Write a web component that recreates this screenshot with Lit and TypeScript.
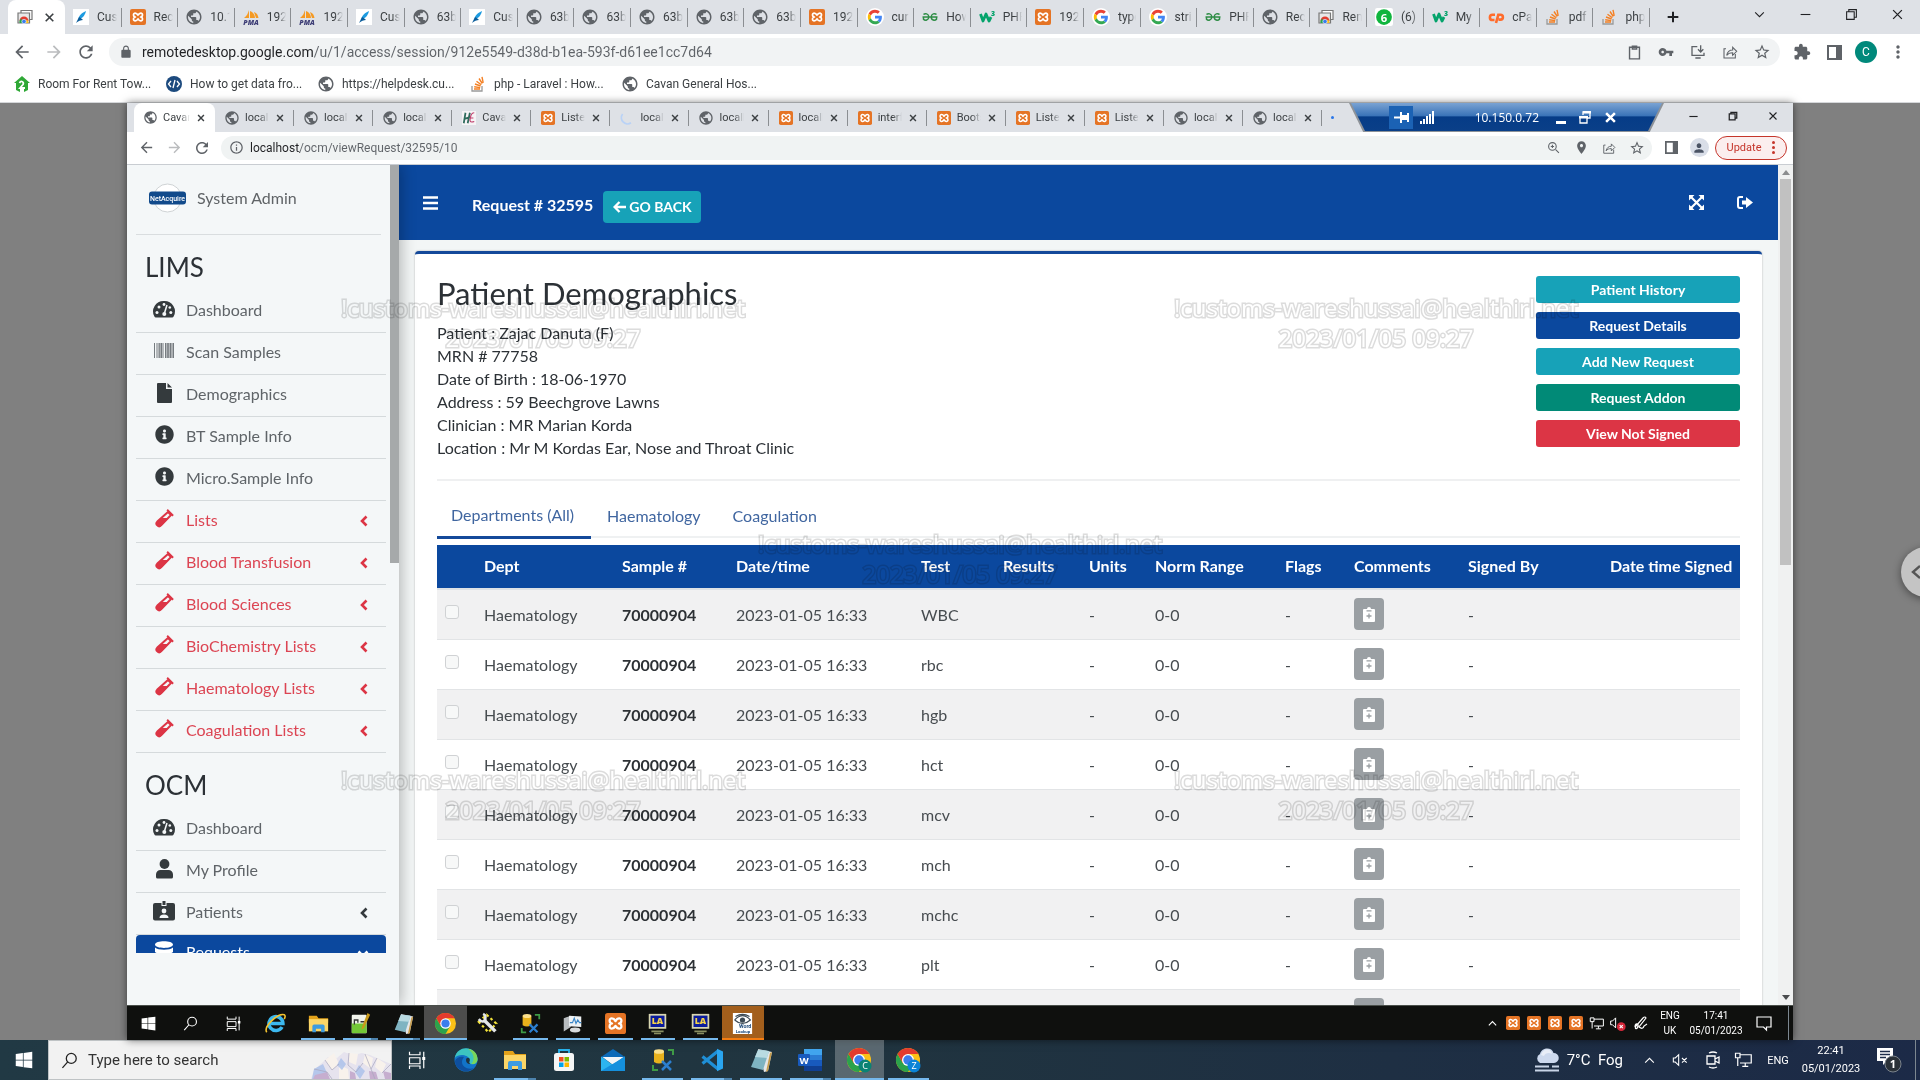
import { LitElement, html, svg, css, nothing } from "lit";
import type { TemplateResult } from "lit";
import { customElement } from "lit/decorators.js";
import { classMap } from "lit/directives/class-map.js";

/* ---------- icons ---------- */

const icon = (w: number, h: number, box: string, body: unknown) =>
  html`<svg class="icon" width=${w} height=${h} viewBox=${box} aria-hidden="true">${body}</svg>`;

const solid = (size: number, d: string) => icon(size, size, "0 0 24 24", svg`<path fill="currentColor" d=${d} />`);
const line = (size: number, d: string, width = 2) =>
  icon(size, size, "0 0 24 24", svg`<path fill="none" stroke="currentColor" stroke-width=${width} d=${d} />`);

const P = {
  back: "M20 11H7.83l5.59-5.59L12 4l-8 8 8 8 1.41-1.41L7.83 13H20v-2z",
  forward: "M4 11h12.17l-5.59-5.59L12 4l8 8-8 8-1.41-1.41L16.17 13H4v-2z",
  refresh:
    "M17.65 6.35C16.2 4.9 14.21 4 12 4c-4.42 0-7.99 3.58-7.99 8s3.57 8 7.99 8c3.73 0 6.84-2.55 7.73-6h-2.08c-.82 2.33-3.04 4-5.65 4-3.31 0-6-2.69-6-6s2.69-6 6-6c1.66 0 3.14.69 4.22 1.78L13 11h7V4l-2.35 2.35z",
  lock: "M18 8h-1V6c0-2.76-2.24-5-5-5S7 3.24 7 6v2H6c-1.1 0-2 .9-2 2v10c0 1.1.9 2 2 2h12c1.1 0 2-.9 2-2V10c0-1.1-.9-2-2-2zM8.9 6c0-1.71 1.39-3.1 3.1-3.1s3.1 1.39 3.1 3.1v2H8.9V6z",
  star: "M22 9.24l-7.19-.62L12 2 9.19 8.63 2 9.24l5.46 4.73L5.82 21 12 17.27 18.18 21l-1.63-7.03L22 9.24zM12 15.4l-3.76 2.27 1-4.28-3.32-2.88 4.38-.38L12 6.1l1.71 4.04 4.38.38-3.32 2.88 1 4.28L12 15.4z",
  puzzle:
    "M20.5 11H19V7c0-1.1-.9-2-2-2h-4V3.5C13 2.12 11.88 1 10.5 1S8 2.12 8 3.5V5H4c-1.1 0-1.99.9-1.99 2v3.8H3.5c1.49 0 2.7 1.21 2.7 2.7s-1.21 2.7-2.7 2.7H2V20c0 1.1.9 2 2 2h3.8v-1.5c0-1.49 1.21-2.7 2.7-2.7 1.49 0 2.7 1.21 2.7 2.7V22H17c1.1 0 2-.9 2-2v-4h1.5c1.38 0 2.5-1.12 2.5-2.5S21.88 11 20.5 11z",
  key: "M12.65 10C11.83 7.67 9.61 6 7 6c-3.31 0-6 2.69-6 6s2.69 6 6 6c2.61 0 4.83-1.67 5.65-4H17v4h4v-4h2v-4H12.65zM7 14c-1.1 0-2-.9-2-2s.9-2 2-2 2 .9 2 2-.9 2-2 2z",
  place:
    "M12 2C8.13 2 5 5.13 5 9c0 5.25 7 13 7 13s7-7.75 7-13c0-3.87-3.13-7-7-7zm0 9.5c-1.38 0-2.5-1.12-2.5-2.5s1.12-2.5 2.5-2.5 2.5 1.12 2.5 2.5-1.12 2.5-2.5 2.5z",
  person:
    "M12 12c2.21 0 4-1.79 4-4s-1.79-4-4-4-4 1.79-4 4 1.79 4 4 4zm0 2c-2.67 0-8 1.34-8 4v2h16v-2c0-2.66-5.33-4-8-4z",
  info: "M11 7h2v2h-2zm0 4h2v6h-2zm1-9C6.48 2 2 6.48 2 12s4.48 10 10 10 10-4.48 10-10S17.52 2 12 2zm0 18c-4.41 0-8-3.59-8-8s3.59-8 8-8 8 3.59 8 8-3.59 8-8 8z",
  globe:
    "M12 2C6.48 2 2 6.48 2 12s4.48 10 10 10 10-4.48 10-10S17.52 2 12 2zm-1 17.93c-3.95-.49-7-3.85-7-7.93 0-.62.08-1.21.21-1.79L9 15v1c0 1.1.9 2 2 2v1.93zm6.9-2.54c-.26-.81-1-1.39-1.9-1.39h-1v-3c0-.55-.45-1-1-1H8v-2h2c.55 0 1-.45 1-1V7h2c1.1 0 2-.9 2-2v-.41c2.93 1.19 5 4.06 5 7.41 0 2.08-.8 3.97-2.1 5.39z",
  dots: "M12 8c1.1 0 2-.9 2-2s-.9-2-2-2-2 .9-2 2 .9 2 2 2zm0 2c-1.1 0-2 .9-2 2s.9 2 2 2 2-.9 2-2-.9-2-2-2zm0 6c-1.1 0-2 .9-2 2s.9 2 2 2 2-.9 2-2-.9-2-2-2z",
  clipboard: "M5 4.500h14v16.500H5zM9 3h6v4H9z",
  install: "M11 4H3v13h18v-4M8 21h8M16 2v9M12 8l4 4 4-4",
  share: "M6 7H3v14h17v-6M7 17c1-5 4-8 9-8V5l6 6-6 6v-4c-4 0-7 1-9 4z",
  close: "M5 5l14 14M19 5L5 19",
  plus: "M12 4v16M4 12h16",
  minus: "M3 12h18",
  restore: "M7 7V3h14v14h-4M3 7h14v14H3z",
  down: "M4 8l8 8 8-8",
  up: "M4 16l8-8 8 8",
  zoom: "M16 16l6 6M10 3a7 7 0 1 0 0 14 7 7 0 0 0 0-14zM10 7v6M7 10h6",
};

const xampp = (s: number) =>
  icon(
    s,
    s,
    "0 0 16 16",
    svg`<rect width="16" height="16" rx="2" fill="#e57425" />
      <path fill="none" stroke="#fff" stroke-width="1.700" stroke-linejoin="round" d="M8 6.200C6.500 3.400 3.500 3.600 3.500 5.800 3.500 7.400 4.600 8 5.400 8 4.600 8 3.500 8.600 3.500 10.200 3.500 12.400 6.500 12.600 8 9.800 9.500 12.600 12.500 12.400 12.500 10.200 12.500 8.600 11.400 8 10.600 8 11.400 8 12.500 7.400 12.500 5.800 12.500 3.600 9.500 3.400 8 6.200z" />`,
  );

const chrome = (s: number, badge?: { letter: string; fill: string }) =>
  icon(
    s,
    s,
    "0 0 24 24",
    svg`<circle cx="12" cy="12" r="12" fill="#fbc116" />
      <path fill="#2ba24c" d="M6.800 15L1.600 6A12 12 0 0 0 12 24l5.200-9z" />
      <path fill="#e33b2e" d="M12 6h10.400A12 12 0 0 0 1.600 6l5.200 9z" />
      <circle cx="12" cy="12" r="6" fill="#fff" /><circle cx="12" cy="12" r="4.700" fill="#3b7ded" />
      ${badge
        ? svg`<circle cx="18" cy="18" r="6.500" fill=${badge.fill} />
            <text x="18" y="21" text-anchor="middle" font-size="9" fill="#fff" font-family="Open Sans, sans-serif">${badge.letter}</text>`
        : nothing}`,
  );

const favicons: Record<string, (s: number) => TemplateResult> = {
  globe: (s) => html`<span class="globe">${solid(s + 2, P.globe)}</span>`,
  xampp,
  leaf: (s) =>
    icon(s, s, "0 0 16 16", svg`<rect width="16" height="16" fill="#fff" />
      <path fill="#1d9be0" d="M13 2C9 4 6 6 5.500 10c3 0 6.500-3 7.500-8z" /><path fill="#0a5c9a" d="M3 14l3-6c2 1 3 2 4 3-2 0-5 1-7 3z" />`),
  pma: (s) =>
    icon(s, s, "0 0 16 16", svg`<path fill="#f59a23" d="M6 1v8H1c3-2 4-5 5-8zM7 2c3 1 5 4 5 7H7zM11 3c3 1 4 3 4.500 6H13z" />
      <text x="8" y="15.500" text-anchor="middle" font-size="7" font-weight="800" font-style="italic" fill="#3f3f77" font-family="Open Sans, sans-serif">PMA</text>`),
  google: (s) =>
    icon(s + 2, s + 2, "-6 -6 60 60", svg`<circle cx="24" cy="24" r="30" fill="#fff" />
      <path fill="#ea4335" d="M24 9.500c3.540 0 6.710 1.220 9.210 3.600l6.850-6.850C35.900 2.380 30.470 0 24 0 14.620 0 6.510 5.380 2.560 13.220l7.980 6.190C12.430 13.720 17.740 9.500 24 9.500z" />
      <path fill="#4285f4" d="M46.980 24.550c0-1.570-.15-3.090-.38-4.550H24v9.020h12.940c-.58 2.960-2.260 5.480-4.780 7.180l7.730 6c4.510-4.180 7.090-10.360 7.090-17.650z" />
      <path fill="#fbbc05" d="M10.530 28.590c-.48-1.450-.76-2.990-.76-4.590s.27-3.140.76-4.590l-7.980-6.190C.92 16.460 0 20.120 0 24c0 3.880.92 7.540 2.560 10.780l7.970-6.190z" />
      <path fill="#34a853" d="M24 48c6.480 0 11.930-2.130 15.890-5.810l-7.730-6c-2.150 1.450-4.920 2.300-8.160 2.300-6.260 0-11.570-4.220-13.470-9.910l-7.980 6.190C6.510 42.620 14.620 48 24 48z" />`),
  geeks: (s) =>
    icon(s, s, "0 0 16 16", svg`<path fill="none" stroke="#2f8d46" stroke-width="1.500" d="M.5 8h15M1.500 5.500C3 4 6.800 4.500 6.800 8S3 12 1.500 10.200V8M14.500 5.500C13 4 9.200 4.500 9.200 8s3.800 4 5.300 2.200V8" />`),
  w3: (s) =>
    icon(s, s, "0 0 16 16", svg`<path fill="none" stroke="#04a36b" stroke-width="2.800" stroke-linejoin="round" d="M1.500 5l2.500 7 3-7 3 7 2-4" />
      <text x="12" y="7" font-size="7" font-weight="800" fill="#04a36b" font-family="Open Sans, sans-serif">3</text>`),
  crd: (s) =>
    icon(s, s, "0 0 16 16", svg`<path fill="#fff" stroke="#777" stroke-width="1.200" d="M4 1.500h11v9H4z" /><path fill="#e8e8e8" stroke="#777" stroke-width="1.200" d="M1 4h11.500v10H1z" />
      <path fill="#e33b2e" d="M2.500 12a4.500 4.500 0 0 1 9 0z" /><path fill="#2ba24c" d="M2.500 14a5 5 0 0 1 1.500-4.500L7 14z" /><path fill="#fbc116" d="M11.500 14a5 5 0 0 0-1.500-3.500L7 14z" /><circle cx="7" cy="12.500" r="2.200" fill="#3b7ded" stroke="#fff" stroke-width=".6" />`),
  six: (s) =>
    icon(s + 2, s + 2, "0 0 16 16", svg`<rect width="16" height="16" rx="2" fill="#fff" /><circle cx="8" cy="8" r="7" fill="#0fb53e" />
      <text x="8" y="12" text-anchor="middle" font-size="10" font-weight="700" fill="#fff" font-family="Open Sans, sans-serif">6</text>`),
  cpanel: (s) =>
    icon(s, s, "0 0 16 16", svg`<path fill="none" stroke="#ff6c2c" stroke-width="2.600" d="M7 5.800H4.500a2.600 2.600 0 0 0 0 5.200h2M8 14l2.300-8.200h2.200a2.300 2.300 0 0 1 0 4.800H10.500" />`),
  stack: (s) =>
    icon(s, s, "0 0 16 16", svg`<path fill="none" stroke="#9a9a9a" stroke-width="1.300" d="M2 10v5h10v-5" />
      <path fill="none" stroke="#f48024" stroke-width="1.400" d="M4 13h6M4.200 10.800l6 .8M5 8l5.600 2M6.500 5.200l4.800 3.600M9 2.500l3.300 5M12 .8l1.200 6" />`),
  hse: (s) =>
    icon(s, s, "0 0 16 16", svg`<rect width="16" height="16" fill="#f6f3f5" /><path fill="none" stroke="#2f6b5c" stroke-width="2" d="M4 2L2 14M9 2L6.500 14M3 9l6-2" />
      <path fill="none" stroke="#c0426f" stroke-width="1.300" d="M14 2c-4 0-4 4-4.500 6S8 14 14 12M10 8h3" />`),
  spin: (s) => icon(s, s, "0 0 16 16", svg`<path fill="none" stroke="#b9d2f6" stroke-width="2" d="M3 3.500A7 7 0 0 0 12.500 13.500" />`),
  house: (s) =>
    icon(s, s, "0 0 16 16", svg`<path fill="#2fa836" d="M8 0l8 7h-2v7l-4 2v-3H6v3l-4-2V7H0z" /><path fill="none" stroke="#fff" stroke-width="1.800" d="M5.500 7C7 4 10.500 6 9 8.500L6 12h5" />`),
  code: (s) =>
    icon(s, s, "0 0 16 16", svg`<circle cx="8" cy="8" r="8" fill="#1c4a7e" /><path fill="none" stroke="#fff" stroke-width="1.300" d="M5 5L2.500 8 5 11M11 5l2.500 3L11 11M9 4L7 12" />`),
};

const nav: Record<string, () => TemplateResult> = {
  gauge: () =>
    icon(22, 18, "0 0 22 18", svg`<path fill="currentColor" d="M11 1a10.500 10.500 0 0 0-9.600 15.600q.5.900 1.400.9h16.400q.9 0 1.400-.9A10.500 10.500 0 0 0 11 1z" />
      <g fill="#f4f7f8"><circle cx="4" cy="12.500" r="1.500" /><circle cx="6" cy="7" r="1.500" /><circle cx="11" cy="4.500" r="1.400" /><circle cx="17.800" cy="12.500" r="1.500" /><circle cx="16.800" cy="7.500" r="1.300" /></g>
      <path stroke="#f4f7f8" stroke-width="1.500" d="M14 5l-2.500 8" /><circle cx="11.300" cy="14" r="2" fill="#f4f7f8" />`),
  barcode: () =>
    icon(20, 16, "0 0 20 16", svg`<path fill="none" stroke="#555b60" stroke-width="1" opacity=".8" d="M.5 0v15M3 0v15M5 0v15M7.500 0v15M9 0v15M11.500 0v15M13 0v15M15 0v15M16.500 0v15M19.500 0v15" />
      <path stroke="#555b60" stroke-width="1.500" opacity=".6" d="M14 0v15M18 0v15M6 0v15" />`),
  file: () => icon(15, 20, "0 0 15 20", svg`<path fill="currentColor" d="M1 0h8v6h6v13q0 1-1 1H1q-1 0-1-1V1q0-1 1-1zM10.500 0L15 4.500h-4.500z" />`),
  info: () =>
    icon(19, 19, "0 0 512 512", svg`<path fill="currentColor" d="M256 8C119.043 8 8 119.083 8 256c0 136.997 111.043 248 248 248s248-111.003 248-248C504 119.083 392.957 8 256 8zm0 110c23.196 0 42 18.804 42 42s-18.804 42-42 42-42-18.804-42-42 18.804-42 42-42zm56 254c0 6.627-5.373 12-12 12h-88c-6.627 0-12-5.373-12-12v-24c0-6.627 5.373-12 12-12h12v-64h-12c-6.627 0-12-5.373-12-12v-24c0-6.627 5.373-12 12-12h64c6.627 0 12 5.373 12 12v100h12c6.627 0 12 5.373 12 12v24z" />`),
  vial: () =>
    icon(19, 19, "0 0 19 19", svg`<path fill="none" stroke="currentColor" stroke-width="2" stroke-linejoin="round" d="M12.500 2.500l4 4M13 3L2.300 12.600a2.600 2.600 0 0 0 3.800 3.800L16 6z" />
      <path fill="currentColor" d="M11.500 1.400l1.300-1.300 6 6-1.300 1.300zM6.500 9h7l-7 7.500a3 3 0 0 1-4.500-4z" />`),
  user: () =>
    icon(17, 20, "0 0 17 20", svg`<circle cx="8.500" cy="5" r="4.900" fill="currentColor" /><path fill="currentColor" d="M4.500 11h8a4.500 4.500 0 0 1 4.500 4.500V18q0 1.600-1.600 1.600H1.600Q0 19.600 0 18v-2.500A4.500 4.500 0 0 1 4.500 11z" />`),
  badge: () =>
    icon(22, 20, "0 0 22 20", svg`<path fill="currentColor" d="M2 2h6.500v3h5V2H20q2 0 2 2v13.500q0 2-2 2H2q-2 0-2-2V4q0-2 2-2zM9.500 0h3v4h-3z" />
      <circle cx="11" cy="10" r="2.400" fill="#f4f7f8" /><path fill="#f4f7f8" d="M6.500 17q0-3.500 4.500-3.500t4.500 3.500z" />`),
  database: () =>
    icon(18, 20, "0 0 18 20", svg`<path fill="currentColor" d="M0 3.500C0-1 18-1 18 3.500S0 8 0 3.500zM0 6.500c3 3 15 3 18 0V11c-3 3-15 3-18 0zM0 13c3 3 15 3 18 0v4c-2 4-16 4-18 0z" />`),
};

/* Icons on the two task bars, drawn in a 24 unit box. */
const app: Record<string, (s: number) => TemplateResult> = {
  windows: (s) => icon(s, s, "0 0 24 24", svg`<path fill="#fff" d="M1 4l9.500-1.300v8.800H1zM11.500 2.500L23 1v10.500H11.500zM1 12.500h9.500v8.800L1 20zM11.500 12.500H23V23l-11.500-1.500z" />`),
  search: (s) => icon(s, s, "0 0 24 24", svg`<path fill="none" stroke="currentColor" stroke-width="1.800" d="M14.500 2a7 7 0 1 0 0 14 7 7 0 0 0 0-14zM9.500 14L2 22.500" />`),
  taskview: (s) => icon(s, s, "0 0 24 24", svg`<path fill="none" stroke="#fff" stroke-width="1.600" d="M2 1v4h14V1M2 9h14v8H2zM2 24v-4h14v4M21 1v22" /><path fill="#fff" d="M19 8h4v4h-4z" />`),
  ie: (s) => icon(s, s, "0 0 24 24", svg`<path fill="none" stroke="#3cb8ee" stroke-width="4" d="M19.500 16A8 8 0 1 1 20.500 12H6" /><path fill="none" stroke="#f4c430" stroke-width="1.800" d="M2 22C-2 16 14 0 22 2q2 1 0 5" />`),
  folder: (s) => icon(s, s, "0 0 24 24", svg`<path fill="#e3a21a" d="M1 3h9l2 3h11v5H1z" /><path fill="#fcd667" d="M1 7h22v14H1z" /><path fill="#3d9be0" d="M5 22v-7q0-2 2-2h10q2 0 2 2v7h-4v-4H9v4z" />`),
  npp: (s) => icon(s, s, "0 0 24 24", svg`<rect x="2" y="2" width="17" height="21" rx="1" fill="#f2f5ec" /><path fill="#73c837" d="M2 12h17v11H2z" /><path stroke="#333" stroke-width="1.500" d="M5 7v6M5 8h4v3M12 10h5" fill="none" /><path fill="#c99a1a" d="M20 0l3 2-7 15-3 2 1-4z" />`),
  notepad: (s) => icon(s, s, "0 0 24 24", svg`<path fill="#e4e6e8" d="M9 1l14 3-4 19-4 1z" /><path fill="#7fb4c2" d="M9 2l11 1-6 19L2 19z" /><path fill="#b9dbe2" d="M9 2l11 1-2 7L6 9z" /><path fill="#c59b4a" d="M21 5l2-1-4 19-2 1z" />`),
  chrome: (s) => chrome(s),
  chromeC: (s) => chrome(s, { letter: "C", fill: "#0b8374" }),
  chromeZ: (s) => chrome(s, { letter: "Z", fill: "#0b83d6" }),
  wrench: (s) => icon(s, s, "0 0 24 24", svg`<path fill="none" stroke="#f3e33b" stroke-width="2.500" stroke-dasharray="3 3" d="M2 10L11 2l11 10-9 10z" /><path fill="none" stroke="#e4e7e9" stroke-width="4" d="M8 8l13 13" /><path fill="none" stroke="#e4e7e9" stroke-width="3" d="M2 7q5 6 8-1M7 1q4 2 2 6" />`),
  ssms: (s) => icon(s, s, "0 0 24 24", svg`<path fill="#e9b21c" d="M3 3h10v11q-5 3-10 0z" /><ellipse cx="8" cy="3.500" rx="5" ry="2.300" fill="#fbe08c" /><path fill="none" stroke="#3f9b46" stroke-width="2" d="M17 2h5v5M2 17v5h5" /><path fill="none" stroke="#2c7fd0" stroke-width="2.500" d="M11 13l9 9M20 13l-9 9" />`),
  monitor: (s) => icon(s, s, "0 0 24 24", svg`<path fill="#b8bcbf" d="M2 6l8-3v13l-8 5z" /><path fill="#eef1f3" d="M8 3l14 1v12L8 15z" /><path fill="none" stroke="#3a86c8" stroke-width="1.300" d="M9 11l3 0 2-5 2 6 2-4 2 3h2" /><ellipse cx="15" cy="19.500" rx="6" ry="2.800" fill="#d7dadc" />`),
  xampp,
  la: (s) => icon(s, s, "0 0 24 24", svg`<path fill="#d8d6b0" d="M2 1h20v17H2z" /><path fill="#0b1c9c" d="M4 3h16v13H4z" /><text x="12" y="13" text-anchor="middle" font-size="10" font-weight="800" fill="#f6d44a" font-family="Open Sans, sans-serif">LA</text><path stroke="#8a8f62" stroke-width="1.800" d="M5 21h14M8 23.500h8" />`),
  lookup: (s) => icon(s, s, "0 0 24 24", svg`<path fill="#fff" d="M1 0h22v24H1z" /><path fill="none" stroke="#3c4a55" stroke-width="1.300" d="M3 8q9-10 18 0-9 8-18 0M4 4q8-5 16 0" /><circle cx="12" cy="8" r="3" fill="#3c4a55" />
      <text x="15" y="17.500" text-anchor="middle" font-size="6" font-weight="700" fill="#1d4a7a" font-family="Roboto, sans-serif">Word</text><text x="12.500" y="23" text-anchor="middle" font-size="5" font-weight="700" fill="#1d4a7a" font-family="Roboto, sans-serif">Lookup</text>`),
  edge: (s) => icon(s, s, "0 0 24 24", svg`<circle cx="12" cy="12" r="11.500" fill="#1273c8" /><path fill="#3cc4c0" d="M.8 10C3-3.500 22-3 23.500 11c0 4-3 6-7 5-3-1 0-2-1-5C14 7 5 5 .8 10z" /><path fill="#7ad65a" d="M14 .8c6 1 9.500 5 9.500 10.200 0 4-3 5.500-6 5 4-5 2-11-3.500-15.200z" /><path fill="#0e4f9e" d="M8 14c0 5 6 8 12 6-6 6-19 3-19-7 1-3 5-5 9-4-1 1-2 3-2 5z" /><path fill="#20343f" d="M12 12c0-3 4-3 3.800 0-.3 2-1.300 2.500.7 4-2 .6-4.500-1-4.500-4z" />`),
  store: (s) => icon(s, s, "0 0 24 24", svg`<path fill="none" stroke="#27b1ea" stroke-width="1.800" d="M7 6V2h10v4" /><rect x="2" y="5" width="20" height="18" rx="2.500" fill="#f5f5f5" /><path fill="#f25022" d="M7 9h4.500v4.500H7z" /><path fill="#7fba00" d="M12.500 9H17v4.500h-4.500z" /><path fill="#00a4ef" d="M7 14.500h4.500V19H7z" /><path fill="#ffb900" d="M12.500 14.500H17V19h-4.500z" />`),
  mail: (s) => icon(s, s, "0 0 24 24", svg`<path fill="#0d6ab8" d="M0 9l12-8 12 8v4H0z" /><path fill="#f3f5f7" d="M1.500 9h21L12 17z" /><path fill="#2cb5ef" d="M0 8.500L12 17l12-8.500V23H0z" /><path fill="#1590dd" d="M0 23L24 8.500V23z" />`),
  vscode: (s) => icon(s, s, "0 0 24 24", svg`<path fill="none" stroke="#1f8fd6" stroke-width="3.200" stroke-linejoin="round" d="M2.500 8.500L18 21M2.500 15.500L18 3" /><path fill="#2aa5ef" d="M17 .8l6 2.600v17.200l-6 2.600z" />`),
  msword: (s) => icon(s, s, "0 0 24 24", svg`<path fill="#41a5ee" d="M6 1h18v6H6z" /><path fill="#2b7cd3" d="M6 7h18v5H6z" /><path fill="#185abd" d="M6 12h18v6H6z" /><path fill="#103f91" d="M6 18h18v5H6z" /><rect y="6" width="12" height="12" rx="1" fill="#185abd" /><text x="6" y="15.500" text-anchor="middle" font-size="9.500" font-weight="700" fill="#fff" font-family="Open Sans, sans-serif">W</text>`),
};

const trayNet = (s: number) =>
  icon(s, s, "0 0 24 24", svg`<path fill="none" stroke="#fff" stroke-width="1.600" d="M8 5h15v11H8M2 3h6v6H2zM5 9v11M15 16v4M11 20.500h8" />`);
const trayMute = (s: number) =>
  icon(s, s, "0 0 24 24", svg`<path fill="none" stroke="#fff" stroke-width="1.600" d="M2 9h3l5-5v16l-5-5H2zM15 9l7 7M22 9l-7 7" />`);
const trayMuteRed = (s: number) =>
  icon(s, s, "0 0 24 24", svg`<path fill="none" stroke="#fff" stroke-width="1.600" d="M1 8h3l5-5v16l-5-5H1z" /><circle cx="18" cy="17" r="7" fill="#d5283a" /><path stroke="#fff" stroke-width="1.800" d="M15.500 14.500l5 5M20.500 14.500l-5 5" />`);

/* ---------- data ---------- */

type Tab = [iconName: string, label: string];

const outerTabs: Tab[] = [
  ["leaf", "Customs"], ["xampp", "Recent"], ["globe", "10.150"], ["pma", "192.168"], ["pma", "192.168"], ["leaf", "Customs"],
  ["globe", "63b5a"], ["leaf", "Customs"], ["globe", "63b5a"], ["globe", "63b5a"], ["globe", "63b5a"], ["globe", "63b5a"],
  ["globe", "63b5a"], ["xampp", "192.168"], ["google", "curre"], ["geeks", "How to"], ["w3", "PHP"], ["xampp", "192.168"],
  ["google", "type"], ["google", "string"], ["geeks", "PHP"], ["globe", "Recent"], ["crd", "Remote"], ["six", "(6)"],
  ["w3", "My"], ["cpanel", "cPanel"], ["stack", "pdf"], ["stack", "php"],
];

const innerTabs: Tab[] = [
  ["globe", "localhost"], ["globe", "localhost"], ["globe", "localhost"], ["hse", "Cavan"], ["xampp", "Listen"], ["spin", "localhost"],
  ["globe", "localhost"], ["xampp", "localhost"], ["xampp", "interface"], ["xampp", "Bootstrap"], ["xampp", "Listen"],
  ["xampp", "Listen"], ["globe", "localhost"], ["globe", "localhost"],
];

const bookmarks: Tab[] = [
  ["house", "Room For Rent Tow..."], ["code", "How to get data fro..."], ["globe", "https://helpdesk.cu..."],
  ["stack", "php - Laravel : How..."], ["globe", "Cavan General Hos..."],
];

interface NavItem { icon: string; label: string; tone?: "red" | "active"; chevron?: "left" | "down"; }

const lims: NavItem[] = [
  { icon: "gauge", label: "Dashboard" },
  { icon: "barcode", label: "Scan Samples" },
  { icon: "file", label: "Demographics" },
  { icon: "info", label: "BT Sample Info" },
  { icon: "info", label: "Micro.Sample Info" },
  ...["Lists", "Blood Transfusion", "Blood Sciences", "BioChemistry Lists", "Haematology Lists", "Coagulation Lists"].map(
    (label): NavItem => ({ icon: "vial", label, tone: "red", chevron: "left" }),
  ),
];

const ocm: NavItem[] = [
  { icon: "gauge", label: "Dashboard" },
  { icon: "user", label: "My Profile" },
  { icon: "badge", label: "Patients", chevron: "left" },
  { icon: "database", label: "Requests", tone: "active", chevron: "down" },
];

const columns: [label: string, width: number][] = [
  ["", 38], ["Dept", 138], ["Sample #", 114], ["Date/time", 185], ["Test", 82], ["Results", 86], ["Units", 66],
  ["Norm Range", 130], ["Flags", 69], ["Comments", 114], ["Signed By", 142], ["Date time Signed", 139],
];

const tests = ["WBC", "rbc", "hgb", "hct", "mcv", "mch", "mchc", "plt", "mpv"];

const facts = [
  "Patient : Zajac Danuta (F)", "MRN # 77758", "Date of Birth : 18-06-1970", "Address : 59 Beechgrove Lawns",
  "Clinician : MR Marian Korda", "Location : Mr M Kordas Ear, Nose and Throat Clinic",
];

const actions: [label: string, tone: string][] = [
  ["Patient History", "teal"], ["Request Details", "blue"], ["Add New Request", "teal"], ["Request Addon", "green"], ["View Not Signed", "crimson"],
];

type Slot = [iconName: string, label: string, state?: "open" | "stack" | "current" | "alert"];

const innerApps: Slot[] = [
  ["windows", "Start"], ["search", "Search"], ["taskview", "Task View"], ["ie", "Internet Explorer"], ["folder", "File Explorer", "open"],
  ["npp", "Notepad++", "stack"], ["notepad", "Notepad", "stack"], ["chrome", "Google Chrome", "current"], ["wrench", "Tools"],
  ["ssms", "Management Studio", "open"], ["monitor", "Performance", "open"], ["xampp", "XAMPP", "open"], ["la", "LA", "open"],
  ["la", "LA", "open"], ["lookup", "Word Lookup", "alert"],
];

const outerApps: Slot[] = [
  ["taskview", "Task View"], ["edge", "Microsoft Edge"], ["folder", "File Explorer", "stack"], ["store", "Microsoft Store"], ["mail", "Mail"],
  ["ssms", "Management Studio", "open"], ["vscode", "Visual Studio Code", "stack"], ["notepad", "Notepad", "open"],
  ["msword", "Word", "stack"], ["chromeC", "Chrome, profile C", "current"], ["chromeZ", "Chrome, profile Z", "open"],
];

@customElement("app-root")
export class AppRoot extends LitElement {
  static styles = css`
    :host { display: block; --blue: #0b489e; --ui: Roboto, "Open Sans", sans-serif; --page: Lato, "Open Sans", sans-serif; font-family: var(--ui); }
    *, *::before, *::after { box-sizing: border-box; }
    button, input { font: inherit; color: inherit; border: 0; margin: 0; padding: 0; background: none; }
    h1, h2, h3, p, ul { margin: 0; padding: 0; font-weight: 400; }
    ul { list-style: none; }
    a { color: inherit; text-decoration: none; }
    .icon { display: block; flex: none; overflow: visible; }
    .desktop { display: flex; flex-direction: column; height: 100vh; overflow: hidden; background: #808080; }

    /* browser frame, shared by the outer and the inner window */
    .strip { display: flex; background: #dee1e6; color: #3c4043; font-size: 12px; }
    .outer .strip { height: 34px; padding-left: 8px; }
    .inner .strip { height: 29px; padding-left: 7px; font-size: 11px; }
    .tabs { display: flex; flex: 1; min-width: 0; }
    .tab { display: flex; align-items: center; flex: 1 1 0; min-width: 0; gap: 8px; padding: 0 5px 0 8px; position: relative; text-align: left; }
    .tab::after { content: ""; position: absolute; right: 0; top: 8px; bottom: 7px; width: 1px; background: #8b8e92; }
    .inner .tab { gap: 6px; padding: 0 9px 0 10px; }
    .inner .tab::after { top: 7px; bottom: 6px; }
    .tab-label { flex: 1; min-width: 0; overflow: hidden; white-space: nowrap; mask-image: linear-gradient(90deg, #000 60%, transparent); }
    .tab.current { flex: none; width: 57px; background: #fff; border-radius: 8px 8px 0 0; padding: 0 9px; justify-content: space-between; }
    .inner .tab.current { width: 81px; padding: 0 9px 0 10px; }
    .tab.current::after { display: none; }
    .globe { color: #5f6368; display: block; margin: 0 -1px; }
    .controls { display: flex; align-items: center; flex: none; width: 270px; color: #202124; }
    .push { margin-left: 40px; }
    .ctl { display: grid; place-items: center; width: 46px; height: 100%; flex: none; padding-bottom: 5px; }
    .ctl.new { padding: 0; }
    .inner .controls { width: 471px; justify-content: flex-end; }
    .inner .ctl { width: 40px; padding: 0 0 3px; }
    .stub { width: 3px; height: 3px; border-radius: 50%; margin: 0 auto 0 9px; background: #2a76e8; }

    .bar { display: flex; align-items: center; background: #fff; color: #5f6368; }
    .outer .bar { height: 36px; padding: 0 6px; }
    .inner .bar { height: 33px; padding: 0 6px 1px 5px; border-bottom: 1px solid #c9cdd2; }
    .tools { display: flex; flex: none; }
    .tool { display: grid; place-items: center; width: 32px; height: 28px; flex: none; }
    .inner .tool { width: 28px; height: 24px; }
    .tool.off { color: #babcbe; }
    .omni { display: flex; align-items: center; flex: 1; min-width: 0; background: #f1f3f4; border-radius: 14px; }
    .outer .omni { height: 28px; margin: 0 6px 0 7px; padding: 0 2px 0 10px; gap: 9px; }
    .inner .omni { height: 24px; margin: 0 5px; padding: 0 1px 0 8px; gap: 6px; background: #f0f3f3; }
    .url { flex: 1; min-width: 0; outline: none; -webkit-text-fill-color: transparent; background-clip: text; -webkit-background-clip: text; }
    .outer .url { font-size: 14px; background-image: linear-gradient(90deg, #202124 172px, #5f6368 172px); }
    .inner .url { font-size: 12px; background-image: linear-gradient(90deg, #202124 50px, #5f6368 50px); }
    .face { display: grid; place-items: center; width: 22px; height: 22px; border-radius: 50%; background: #00897b; color: #fff; font-size: 12px; }
    .inner .face { width: 19px; height: 19px; background: #d9dee8; color: #4a5364; }
    .update { display: flex; align-items: center; justify-content: center; gap: 11px; width: 72px; height: 24px; border: 1px solid #c5352b; border-radius: 12px; background: #fbeeee; color: #c5352b; font-size: 11px; margin-left: 2px; }
    .marks { display: flex; height: 33px; padding: 0 14px; background: #fff; border-bottom: 1px solid #d5d7da; font-size: 12px; color: #3c4043; }
    .mark { display: flex; align-items: center; gap: 8px; width: 152px; padding-bottom: 4px; white-space: nowrap; }

    /* remote session */
    .session { flex: 1; min-height: 0; position: relative; padding: 0 127px; display: flex; }
    .inner { flex: 1; min-width: 0; display: flex; flex-direction: column; position: relative; background: #f4f6f8; box-shadow: 0 0 8px rgba(0, 0, 0, .55); }
    .rdp { position: absolute; top: 0; right: 129px; width: 315px; height: 29px; padding: 0 46px 0 40px; display: flex; align-items: center; color: #fff; font-size: 13px; background: #8d9298; clip-path: polygon(0 0, 100% 0, 95.5% 100%, 4.500% 100%); }
    .rdp::before { content: ""; position: absolute; inset: 0 2px 1px; background: linear-gradient(#7aa3d3, #3b74b8 45%, #063c87 50%, #0a3f88); clip-path: polygon(0 0, 100% 0, 95.5% 100%, 4.500% 100%); }
    .rdp > * { position: relative; }
    .pin { display: grid; place-items: center; width: 24px; height: 23px; background: #1b62b4; margin-right: 7px; }
    .host { margin-left: auto; margin-right: 16px; font-family: "Open Sans", sans-serif; font-size: 12px; }
    .rdp button + button { margin-left: 12px; }
    .page { flex: 1; min-height: 0; display: flex; overflow: hidden; font-family: var(--page); font-size: 16px; color: #2c3136; }
    .side { width: 272px; flex: none; position: relative; z-index: 1; padding: 0 0 52px; background: #f4f7f8; box-shadow: 2px 0 14px rgba(0, 0, 0, .28); display: flex; }
    .side-scroll { flex: 1; overflow: hidden; padding: 0 4px 0 9px; }
    .side-bar { width: 9px; height: 398px; background: #a6a9aa; flex: none; }
    .brand { display: flex; align-items: center; gap: 11px; height: 70px; padding: 0 0 4px 13px; margin-right: 5px; border-bottom: 1px solid #d9dddf; font-size: 16px; color: #606467; }
    .side h2 { height: 56px; padding: 11px 0 0 9px; font-size: 26px; line-height: 42px; }
    .nav-item { display: flex; align-items: center; height: 42px; padding: 0 17px 6px 16px; border-bottom: 1px solid #d5dadc; color: #5f6468; }
    .nav-icon { width: 24px; margin-right: 10px; display: grid; place-items: center; color: #343a3d; }
    .nav-label { flex: 1; font-size: 16px; padding-top: 1px; }
    .nav-item.red { color: #dc4553; }
    .nav-item.red .nav-icon { color: #dc3545; }
    .nav-item.active { background: var(--blue); border: 0; border-radius: 4px; padding-bottom: 10px; }
    .nav-item.active, .nav-item.active .nav-icon { color: #fff; }
    .chev { color: #343a3d; padding-top: 5px; }
    .red .chev { color: #dc3545; } .active .chev { color: #fff; }

    .main { flex: 1; min-width: 0; overflow: hidden; background: #f3f6f6; }
    .head { display: flex; align-items: center; height: 75px; padding: 0 25px 0 24px; background: var(--blue); color: #fff; }
    .head h1 { font-size: 16px; font-weight: 700; margin: 4px 10px 0 34px; }
    .goback { display: flex; align-items: center; justify-content: center; gap: 3px; width: 98px; height: 32px; margin-top: 8px; border-radius: 4px; background: #17a2b8; font-size: 14px; font-weight: 700; }
    .head .end { margin-left: auto; display: flex; gap: 33px; }
    .card { margin: 11px 16px 0; background: #fff; border-top: 3px solid #14499a; border-radius: 4px; padding: 22px 22px 0; box-shadow: 0 0 2px rgba(0, 0, 0, .3); }
    .intro { display: flex; justify-content: space-between; height: 205px; border-bottom: 2px solid #eff0f1; }
    .intro h2 { font-size: 31px; line-height: 35px; margin-bottom: 10px; }
    .intro p { line-height: 23px; }
    .actions { display: flex; flex-direction: column; gap: 9px; width: 204px; }
    .action { height: 27px; border-radius: 3px; color: #fff; font-size: 14px; font-weight: 700; }
    .teal { background: #17a2b8; } .blue { background: var(--blue); } .green { background: #018a77; } .crimson { background: #dc3545; }
    .depts { display: flex; margin-top: 12px; height: 45px; border-bottom: 2px solid #eff1f2; }
    .dept { padding: 0 16px 1px; color: #4066a0; height: 46px; }
    .dept.on { padding: 0 17px 0 14px; border-bottom: 3px solid #14499a; }
    table { width: 100%; table-layout: fixed; border-collapse: separate; border-spacing: 0; margin-top: 7px; }
    th { height: 45px; padding: 0 0 2px 9px; background: var(--blue); background-clip: padding-box; color: #fff; text-align: left; font-weight: 700; white-space: nowrap; border-bottom: 2px solid #dee2e6; }
    td { height: 50px; padding: 0 0 1px 9px; border-bottom: 1px solid #e2e4e6; white-space: nowrap; color: #474c50; }
    tbody tr:nth-child(odd) td { background: #f1f1f2; }
    td b { color: #2c3034; }
    .tick { appearance: none; display: block; width: 14px; height: 14px; border: 1px solid #d0d2d4; border-radius: 3px; background: #f7f8f8; margin: 0 0 4px -1px; }
    .note { display: grid; place-items: center; width: 30px; height: 32px; border-radius: 4px; background: #9a9fa3; color: #fff; }
    .scroll { width: 15px; flex: none; background: #f0f1f1; display: flex; flex-direction: column; align-items: center; justify-content: space-between; padding: 5px 0; color: #8b8d8f; }
    .thumb { width: 11px; height: 386px; background: #c1c1c1; margin: 4px 0 auto; }

    .stamp { position: absolute; text-align: center; width: 440px; margin-left: -220px; font-family: "Open Sans", sans-serif; font-size: 24px; line-height: 30px; color: #fff; -webkit-text-stroke: 3px #dcdcdc; paint-order: stroke fill; mix-blend-mode: multiply; pointer-events: none; z-index: 3; }
    .w { left: calc(50% - 417px); } .c { left: 50%; } .e { left: calc(50% + 416px); }
    .r1 { top: 190px; } .r2 { top: 426px; } .r3 { top: 662px; }
    .handle { position: absolute; right: -31px; top: 444px; width: 50px; height: 50px; border-radius: 50%; background: #c4c4c4; box-shadow: 0 2px 8px rgba(0, 0, 0, .45); display: flex; align-items: center; padding-left: 10px; color: #555; }

    /* task bars */
    .task { display: flex; flex: none; color: #fff; }
    .inner .task { height: 35px; background: #0f100e; border-top: 1px solid #4a4f4a; }
    .outer-task { height: 40px; background: linear-gradient(90deg, #213944, #20343f 45%, #1c2a47); }
    .slots { display: flex; flex: none; }
    .inner .slots { width: 637px; }
    .slots button { flex: 1 1 0; }
    .outer-task .slots { width: 541px; }
    .slot { display: grid; place-items: center; position: relative; min-width: 0; }
    .slot::after { position: absolute; bottom: 0; left: 4px; right: 4px; height: 2px; background: #76b9ed; }
    .slot.open::after, .slot.stack::after, .slot.current::after, .slot.alert::after { content: ""; }
    .slot.stack::after { background: linear-gradient(90deg, #76b9ed 80%, #4d83ad 80%); }
    .slot.current { background: rgba(255, 255, 255, .26); }
    .slot.current::after, .slot.alert::after { left: 0; right: 0; }
    .slot.alert { background: #a35f1c; } .slot.alert::after { background: #f57c10; }
    .start { width: 48px; display: grid; place-items: center; }
    .find { display: flex; align-items: center; width: 344px; background: #f2f2f2; border: 1px solid #bfc3c5; color: #222; padding-left: 12px; gap: 10px; overflow: hidden; }
    .find input { flex: 1; min-width: 0; font-size: 15px; outline: none; }
    .find input::placeholder { color: #333; opacity: 1; }
    .find .icon:last-child { align-self: flex-end; }
    .tray { display: flex; margin-left: auto; font-size: 10px; }
    .tray > * { display: grid; place-items: center; align-content: center; flex: none; }
    .clock { text-align: center; }
    .inner .clock { width: 60px; line-height: 15px; } .inner .lang { width: 32px; line-height: 15px; text-align: center; }
    .outer-task .clock { width: 64px; font-size: 11px; line-height: 18px; white-space: nowrap; }
    .outer-task .lang { width: 42px; font-size: 11px; }
    .t20 { width: 20px; } .t21 { width: 21px; } .t22 { width: 22px; } .t26 { width: 26px; } .t28 { width: 28px; } .t32 { width: 32px; } .t34 { width: 34px; } .t52 { width: 52px; }
    .tray > .t42 { width: 42px; padding-right: 6px; }
    .edge-line { width: 5px; border-left: 1px solid #7c8790; }
    .tray > .weather { display: flex; align-items: center; gap: 8px; font-size: 15px; padding-right: 12px; }
    .weather span { white-space: pre; }
  `;

  private tab([name, label]: Tab, size: number, closable: boolean) {
    return html`<button class="tab" role="tab">
      ${favicons[name](size)}<span class="tab-label">${label}</span>${closable ? line(10, P.close, 3.5) : nothing}
    </button>`;
  }

  private navItem(item: NavItem) {
    return html`<li>
      <a href="#" class="nav-item ${item.tone ?? ""}">
        <span class="nav-icon">${nav[item.icon]()}</span><span class="nav-label">${item.label}</span>
        ${item.chevron
          ? html`<span class="chev">${item.chevron === "left"
              ? icon(10, 12, "0 0 10 12", svg`<path fill="none" stroke="currentColor" stroke-width="2.600" d="M7.500 1.500L3 6l4.500 4.500" />`)
              : icon(12, 10, "0 0 12 10", svg`<path fill="none" stroke="currentColor" stroke-width="2.600" d="M1.500 2.500L6 7l4.500-4.500" />`)}</span>`
          : nothing}
      </a>
    </li>`;
  }

  private slots(items: Slot[], size: number) {
    return items.map(
      ([name, label, state]) =>
        html`<button class="slot ${state ?? ""}" aria-label=${label}>${app[name](["windows", "search", "taskview"].includes(name) ? size - 6 : size)}</button>`,
    );
  }

  private stamp(place: string) {
    return html`<div class="stamp ${place}">!customs-wareshussai@healthirl.net<br />2023/01/05 09:27</div>`;
  }

  private outerFrame() {
    return html`<header class="outer">
      <div class="strip">
        <div class="tabs" role="tablist">
          <button class="tab current" role="tab" aria-selected="true">${favicons.crd(16)}${line(13, P.close, 3)}</button>
          ${outerTabs.map((t) => this.tab(t, 16, false))}
        </div>
        <div class="controls">
          <button class="ctl new" aria-label="New tab">${line(16, P.plus, 3)}</button>
          <button class="ctl push" aria-label="Search tabs">${line(13, P.down, 2)}</button>
          <button class="ctl" aria-label="Minimise">${line(13, P.minus, 2)}</button>
          <button class="ctl" aria-label="Restore">${line(13, P.restore, 2)}</button>
          <button class="ctl" aria-label="Close">${line(15, P.close, 2)}</button>
        </div>
      </div>
      <div class="bar">
        <button class="tool" aria-label="Back">${solid(20, P.back)}</button>
        <button class="tool off" aria-label="Forward">${solid(20, P.forward)}</button>
        <button class="tool" aria-label="Reload">${solid(20, P.refresh)}</button>
        <div class="omni">
          ${solid(14, P.lock)}
          <input class="url" aria-label="Address" .value=${"remotedesktop.google.com/u/1/access/session/912e5549-d38d-b1ea-593f-d61ee1cc7d64"} />
          <div class="tools">
            <button class="tool" aria-label="Clipboard">${line(17, P.clipboard)}</button>
            <button class="tool" aria-label="Passwords">${solid(16, P.key)}</button>
            <button class="tool" aria-label="Install">${line(16, P.install)}</button>
            <button class="tool" aria-label="Share">${line(16, P.share, 1.6)}</button>
            <button class="tool" aria-label="Bookmark">${solid(18, P.star)}</button>
          </div>
        </div>
        <button class="tool" aria-label="Extensions">${solid(18, P.puzzle)}</button>
        <button class="tool" aria-label="Side panel">${icon(15, 15, "0 0 15 15", svg`<path fill="none" stroke="currentColor" stroke-width="2" d="M1 1h13v13H1z" /><path fill="currentColor" d="M9 1h5v13H9z" />`)}</button>
        <button class="tool" aria-label="Profile"><span class="face">C</span></button>
        <button class="tool" aria-label="Menu">${solid(20, P.dots)}</button>
      </div>
      <nav class="marks">${bookmarks.map(([name, label]) => html`<a class="mark" href="#">${favicons[name](16)}${label}</a>`)}</nav>
    </header>`;
  }

  private innerFrame() {
    return html`<div class="strip">
        <div class="tabs" role="tablist">
          <button class="tab current" role="tab" aria-selected="true">
            ${favicons.globe(13)}<span class="tab-label">Cavan</span>${line(10, P.close, 3.5)}
          </button>
          ${innerTabs.map((t) => this.tab(t, 14, true))}
        </div>
        <div class="controls">
          <span class="stub"></span>
          <button class="ctl" aria-label="Minimise">${line(11, P.minus, 2.5)}</button>
          <button class="ctl" aria-label="Restore">${line(10, P.restore, 3)}</button>
          <button class="ctl" aria-label="Close">${line(12, P.close, 2.2)}</button>
        </div>
      </div>
      <div class="rdp">
        <button class="pin" aria-label="Pin">${icon(15, 13, "0 0 15 13", svg`<path fill="none" stroke="#fff" stroke-width="2" d="M0 6.500h7M7 1v11M14 2v9" /><path fill="#fff" d="M7 4h7v5H7z" />`)}</button>
        ${icon(14, 13, "0 0 14 13", svg`<path fill="#fff" d="M0 10h2v3H0zM3 8h2v5H3zM6 5h2v8H6zM9 3h2v10H9zM12 0h2v13h-2z" />`)}
        <span class="host">10.150.0.72</span>
        <button aria-label="Minimise bar">${icon(12, 13, "0 0 12 13", svg`<path fill="#fff" d="M1 10h10v3H1z" />`)}</button>
        <button aria-label="Restore bar">${icon(12, 13, "0 0 12 13", svg`<path fill="none" stroke="#fff" stroke-width="1.300" d="M4 4V1h7v6H8M1 6h7v6H1z" /><path fill="#fff" d="M4 0h8v2.500H4zM0 5h9v2.500H0z" />`)}</button>
        <button aria-label="Close bar">${line(15, P.close, 4)}</button>
      </div>
      <div class="bar">
        <button class="tool" aria-label="Back">${solid(17, P.back)}</button>
        <button class="tool off" aria-label="Forward">${solid(17, P.forward)}</button>
        <button class="tool" aria-label="Reload">${solid(18, P.refresh)}</button>
        <div class="omni">
          ${solid(15, P.info)}
          <input class="url" aria-label="Address" .value=${"localhost/ocm/viewRequest/32595/10"} />
          <div class="tools">
            <button class="tool" aria-label="Zoom">${line(13, P.zoom)}</button>
            <button class="tool" aria-label="Location">${solid(15, P.place)}</button>
            <button class="tool" aria-label="Share">${line(14, P.share, 1.6)}</button>
            <button class="tool" aria-label="Bookmark">${solid(16, P.star)}</button>
          </div>
        </div>
        <button class="tool" aria-label="Side panel">${icon(13, 13, "0 0 15 15", svg`<path fill="none" stroke="currentColor" stroke-width="2" d="M1 1h13v13H1z" /><path fill="currentColor" d="M9 1h5v13H9z" />`)}</button>
        <button class="tool" aria-label="Profile"><span class="face">${solid(14, P.person)}</span></button>
        <button class="update">Update ${icon(3, 13, "0 0 3 13", svg`<g fill="currentColor"><circle cx="1.500" cy="1.500" r="1.500" /><circle cx="1.500" cy="6.500" r="1.500" /><circle cx="1.500" cy="11.500" r="1.500" /></g>`)}</button>
      </div>`;
  }

  private sidebar() {
    return html`<aside class="side">
      <div class="side-scroll">
        <div class="brand">
          ${icon(37, 30, "0 0 37 30", svg`<circle cx="18.500" cy="15" r="14" fill="#fff" stroke="#cfd3d5" /><rect y="8.500" width="37" height="13" rx="3" fill="#114a8b" />
            <text x="18.500" y="17.500" text-anchor="middle" font-size="7" font-weight="500" fill="#fff" font-family="Roboto, sans-serif">NetAcquire</text>`)}
          System Admin
        </div>
        <h2>LIMS</h2>
        <ul>${lims.map((i) => this.navItem(i))}</ul>
        <h2>OCM</h2>
        <ul>${ocm.map((i) => this.navItem(i))}</ul>
      </div>
      <div class="side-bar"></div>
    </aside>`;
  }

  private results() {
    return html`<table>
      <colgroup>${columns.map(([, w]) => html`<col style="width:${w}px" />`)}</colgroup>
      <thead><tr>${columns.map(([label]) => html`<th scope="col">${label}</th>`)}</tr></thead>
      <tbody>
        ${tests.map(
          (test) => html`<tr>
            <td><input type="checkbox" class="tick" aria-label=${`Select ${test}`} /></td>
            <td>Haematology</td><td><b>70000904</b></td><td>2023-01-05 16:33</td><td>${test}</td><td></td><td>-</td><td>0-0</td><td>-</td>
            <td><button class="note" aria-label=${`Comment on ${test}`}>${icon(12, 15, "0 0 12 15", svg`<path fill="currentColor" d="M1 2h3q0-2 2-2t2 2h3q1 0 1 1v11q0 1-1 1H1q-1 0-1-1V3q0-1 1-1z" /><path stroke="#9a9fa3" stroke-width="1.300" d="M3.500 3.800h5M6 6.500v5M3.500 9h5" />`)}</button></td>
            <td>-</td><td></td>
          </tr>`,
        )}
      </tbody>
    </table>`;
  }

  private main() {
    return html`<main class="main">
      <div class="head">
        <button aria-label="Toggle menu">${icon(15, 14, "0 0 15 14", svg`<path stroke="#fff" stroke-width="2.600" d="M0 1.500h15M0 7h15M0 12.500h15" />`)}</button>
        <h1>Request # 32595</h1>
        <button class="goback">${icon(13, 12, "0 0 13 12", svg`<path fill="none" stroke="#fff" stroke-width="2.300" d="M6.500 1L1.600 6l4.900 5M2 6h11" />`)}GO BACK</button>
        <div class="end">
          <button aria-label="Full screen">${icon(15, 15, "0 0 15 15", svg`<path fill="#fff" d="M0 0h5.500L0 5.500zM9.500 0H15v5.500zM0 9.500L5.500 15H0zM15 9.500V15H9.500z" /><path stroke="#fff" stroke-width="2.200" d="M2 2l11 11M13 2L2 13" />`)}</button>
          <button aria-label="Sign out">${icon(16, 13, "0 0 16 13", svg`<path fill="none" stroke="#fff" stroke-width="2" d="M6 1H3Q1 1 1 3v7q0 2 2 2h3" /><path fill="#fff" d="M5 4.500h4V1l7 5.500L9 12V8.500H5z" />`)}</button>
        </div>
      </div>
      <section class="card">
        <div class="intro">
          <div><h2>Patient Demographics</h2>${facts.map((f) => html`<p>${f}</p>`)}</div>
          <div class="actions">${actions.map(([label, tone]) => html`<button class="action ${tone}">${label}</button>`)}</div>
        </div>
        <div class="depts" role="tablist">
          ${["Departments (All)", "Haematology", "Coagulation"].map(
            (d, i) => html`<button role="tab" class=${classMap({ dept: true, on: i === 0 })}>${d}</button>`,
          )}
        </div>
        ${this.results()}
      </section>
    </main>`;
  }

  private innerTaskbar() {
    return html`<div class="task">
      <div class="slots">${this.slots(innerApps, 21)}</div>
      <div class="tray">
        <span class="t20">${line(11, P.up, 2.5)}</span>
        ${[1, 2, 3, 4].map(() => html`<span class="t21">${xampp(14)}</span>`)}
        <span class="t20">${trayNet(15)}</span>
        <span class="t22">${trayMuteRed(15)}</span>
        <span class="t26">${icon(14, 14, "0 0 14 14", svg`<path fill="none" stroke="#fff" stroke-width="1.200" d="M1 11c0-4 4-4 3-1-1 4-4 3-2 0L9 2q2-2 3 0L5 11q4 3 5-1l3-2" />`)}</span>
        <span class="lang">ENG<br />UK</span>
        <span class="clock">17:41<br />05/01/2023</span>
        <span class="t42">${icon(16, 15, "0 0 16 15", svg`<path fill="none" stroke="#fff" stroke-width="1.200" d="M1 1h14v10h-4.500v3l-3-3H1z" />`)}</span>
        <span class="edge-line"></span>
      </div>
    </div>`;
  }

  private outerTaskbar() {
    return html`<footer class="task outer-task">
      <button class="start" aria-label="Start">${app.windows(18)}</button>
      <label class="find">
        ${app.search(17)}<input placeholder="Type here to search" aria-label="Search" />
        ${icon(80, 28, "0 0 80 28", svg`<path fill="#e6e3ee" d="M0 28l3-9 8-7 6-6 9 1 7-6 9 3 9-2 8 2 9 4 12 5v15z" />
          <path fill="#f8f2ec" d="M14 9l9-7 5 11-7 6zM38 2l9 1-2 11-7-3zM54 3l8 4-2 11-8-6zM28 14l9 4 1 10H28zM66 7l9 6-4 9-7-6z" />
          <path fill="#a9bfea" d="M3 18l9-5 4 9-4 6H1zM30 7l5 6-4 6-5-5zM48 14l6 6-5 8-5-7z" opacity=".8" />
          <path fill="#c6aecf" d="M4 24l12-3 3 7H2zM39 20l5 2 1 6h-6zM58 20l7 1 2 7h-8zM72 20l8 2v6h-6z" />
          <path fill="none" stroke="#a8a6bd" stroke-width=".7" d="M14 9l7 10 7-6M38 2l-1 12 8 7 7-9M54 3l6 15 6-11M3 18l13 3 5 7M60 18l4 10M71 22l9-9" />`)}
      </label>
      <div class="slots">${this.slots(outerApps, 24)}</div>
      <div class="tray">
        <span class="weather">
          ${icon(24, 24, "0 0 24 24", svg`<path fill="#cdd9ee" d="M5 15a5 5 0 0 1 0-9C7-1 17-1 18.500 5A5 5 0 0 1 19 15z" /><path fill="#e9eef8" d="M6 7C8 0 16 0 17 6 14 4 10 5 9 8z" /><path stroke="#c8d4e6" stroke-width="1.800" d="M0 18.500h14M17 18.500h7M0 22.500h24" />`)}
          <span>7°C  Fog</span>
        </span>
        <span class="t28">${line(13, P.up, 2)}</span>
        <span class="t34">${trayMute(16)}</span>
        <span class="t32">${icon(14, 18, "0 0 14 18", svg`<path fill="none" stroke="#fff" stroke-width="1.300" d="M1 5h8v8H1zM9 8l4-2v6l-4-2M3 2q4-2 8 0M3 16q4 2 8 0" />`)}</span>
        <span class="t28">${trayNet(18)}</span>
        <span class="lang">ENG</span>
        <span class="clock">22:41<br />05/01/2023</span>
        <span class="t52">${icon(26, 26, "0 0 26 26", svg`<path fill="#fff" d="M1 1h16v13h-6l-4 4v-4H1z" /><path stroke="#1d2c48" stroke-width="1.300" d="M4 4.500h10M4 7.500h10M4 10.500h6" /><circle cx="17" cy="17" r="8" fill="#2a3138" stroke="#7b838c" />
          <text x="17" y="21" text-anchor="middle" font-size="11" font-weight="700" fill="#fff" font-family="Open Sans, sans-serif">1</text>`)}</span>
        <span class="edge-line"></span>
      </div>
    </footer>`;
  }

  render() {
    return html`<div class="desktop">
      ${this.outerFrame()}
      <div class="session">
        <div class="inner">
          ${this.innerFrame()}
          <div class="page">
            ${this.sidebar()}${this.main()}
            <div class="scroll">
              ${icon(8, 5, "0 0 8 5", svg`<path fill="currentColor" d="M4 0l4 5H0z" />`)}
              <div class="thumb"></div>
              ${icon(8, 5, "0 0 8 5", svg`<path fill="#4a4c4e" d="M0 0h8L4 5z" />`)}
            </div>
          </div>
          ${this.innerTaskbar()}
        </div>
        ${["w r1", "e r1", "c r2", "w r3", "e r3"].map((p) => this.stamp(p))}
        <button class="handle" aria-label="Session options">${icon(10, 14, "0 0 10 14", svg`<path fill="none" stroke="currentColor" stroke-width="2.400" d="M9 1L2 7l7 6" />`)}</button>
      </div>
      ${this.outerTaskbar()}
    </div>`;
  }
}
